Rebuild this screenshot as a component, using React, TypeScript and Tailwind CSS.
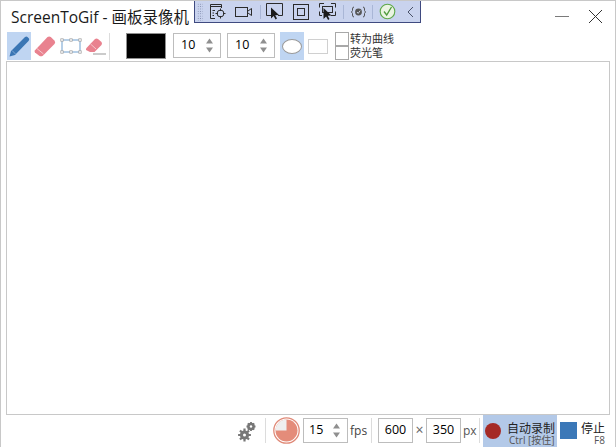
import React from "react";

function Spinner({ value, w = 48, pl = "pl-[7px]" }: { value: string; w?: number; pl?: string }) {
  return (
    <div className={`flex h-[25px] items-center border border-[#bdbdbd] bg-white pr-[6px] ${pl}`} style={{ width: w }}>
      <span className="flex-1 text-[12.5px] leading-none text-black">{value}</span>
      <svg width="9" height="17" viewBox="0 0 9 17">
        <path d="M4.5 1.5 L8 6.5 L1 6.5 Z" fill="#8f8f8f" />
        <path d="M4.5 15.5 L8 10.5 L1 10.5 Z" fill="#8f8f8f" />
      </svg>
    </div>
  );
}

function Pen() {
  return (
    <svg width="24" height="28" viewBox="0 0 24 28">
      <path d="M2.5 24.5 L4 19 L18 5 Q19.5 4 20.5 5 L22 6.5 Q22.7 7.8 21.5 9 L8 23 Z" fill="#3a76b4" />
      <path d="M5 18.5 L8.5 22" stroke="#8fb4da" strokeWidth="0.8" />
    </svg>
  );
}

function Eraser() {
  return (
    <svg width="22" height="24" viewBox="0 0 22 24">
      <path d="M0.8 16.5 L13.5 3 Q15.2 2 16.8 3 L20.6 6.8 Q21.8 8.5 20.5 10 L8.8 21.8 Q7 22.8 5.2 21.8 L1 18.6 Q0.2 17.5 0.8 16.5 Z" fill="#e9828f" />
      <path d="M3 14.6 L9.5 20" stroke="#f6c6cc" strokeWidth="1" />
    </svg>
  );
}

function Select() {
  const pts = [[2, 2], [11, 2], [20, 2], [2, 14], [20, 14], [11, 14]];
  return (
    <svg width="22" height="16" viewBox="0 0 22 16">
      <rect x="2" y="2" width="18" height="12" fill="none" stroke="#6f9fcf" strokeWidth="1" />
      {pts.map(([x, y], i) => (
        <rect key={i} x={x - 1.2} y={y - 1.2} width="2.4" height="2.4" fill="#fff" stroke="#9a9a9a" strokeWidth="0.7" />
      ))}
    </svg>
  );
}

function EraseLine() {
  return (
    <svg width="22" height="20" viewBox="0 0 22 20">
      <path d="M1 12.5 L10 3 Q11.5 2 13 3 L16.5 6 Q17.5 7.5 16.5 9 L9.5 16 L5 16 L1 14 Z" fill="#e9828f" />
      <path d="M5.5 8 L11 13" stroke="#f6c6cc" strokeWidth="1" />
      <path d="M8 18 H21" stroke="#a8a8a8" strokeWidth="1.2" />
    </svg>
  );
}

function VSep({ h = 20, c = "#a9b6d6" }: { h?: number; c?: string }) {
  return <div className="w-px shrink-0" style={{ height: h, backgroundColor: c }} />;
}

function Cursor({ x, y }: { x: number; y: number }) {
  return <path d={`M${x} ${y} L${x} ${y + 11} L${x + 2.6} ${y + 8.6} L${x + 4.6} ${y + 12} L${x + 6} ${y + 11} L${x + 4.2} ${y + 7.8} L${x + 8} ${y + 7.5} Z`} fill="#1b1b1b" />;
}

function FloatBar() {
  const ink = "#2b2b2b";
  return (
    <div className="absolute left-[193px] top-0 flex h-[22px] w-[227px] items-center border border-t-0 border-[#3f4a80] bg-[#c9d3ee]">
      <div className="ml-[2px] h-[18px] w-[6px] bg-[radial-gradient(#7d87a8_0.7px,transparent_0.8px)] bg-[length:2.4px_2.4px]" />
      <svg className="ml-[6px]" width="20" height="17" viewBox="0 0 20 17">
        <path d="M1.5 1.5 H12.5 M1.5 3.5 H12.5 M1.5 1.5 V15.5 H6 M12.5 1.5 V5" stroke={ink} strokeWidth="1" fill="none" />
        <path d="M3.5 7.5 H6 M3.5 10 H5 M3.5 12.5 H5" stroke={ink} strokeWidth="1" />
        <circle cx="11.5" cy="10.5" r="3.4" fill="none" stroke={ink} strokeWidth="1" />
        <path d="M11.5 5.5 V8 M11.5 13 V15.5 M6.5 10.5 H9 M14 10.5 H16.5" stroke={ink} strokeWidth="1" />
      </svg>
      <svg className="ml-[6px]" width="18" height="12" viewBox="0 0 18 12">
        <rect x="0.5" y="1.5" width="12" height="9" fill="none" stroke={ink} />
        <path d="M13 5 L16.5 2.5 V9.5 L13 7" fill="none" stroke={ink} />
      </svg>
      <div className="ml-[7px]"><VSep h={14} /></div>
      <svg className="ml-[5px]" width="18" height="17" viewBox="0 0 18 17">
        <path d="M5 12.5 H0.5 V0.5 H16.5 V12.5 H12" fill="none" stroke={ink} />
        <Cursor x={5} y={4.5} />
      </svg>
      <svg className="ml-[9px]" width="16" height="16" viewBox="0 0 16 16">
        <rect x="0.5" y="0.5" width="15" height="15" fill="none" stroke={ink} />
        <rect x="4.5" y="4.5" width="7" height="7" fill="none" stroke={ink} />
      </svg>
      <svg className="ml-[10px]" width="17" height="17" viewBox="0 0 17 17">
        <path d="M0.5 4.5 V0.5 H5 M12 0.5 H16.5 V4.5 M16.5 8.5 V12.5 H12 M0.5 8.5 V12.5 H3" fill="none" stroke={ink} />
        <rect x="3.5" y="3.5" width="10" height="6" fill="none" stroke={ink} />
        <Cursor x={4.5} y={5} />
      </svg>
      <div className="ml-[7px]"><VSep h={14} /></div>
      <svg className="ml-[7px]" width="15" height="12" viewBox="0 0 15 12">
        <path d="M3 1 Q1.5 1 1.5 3 V4.5 L0.5 6 L1.5 7.5 V9 Q1.5 11 3 11 M12 1 Q13.5 1 13.5 3 V4.5 L14.5 6 L13.5 7.5 V9 Q13.5 11 12 11" fill="none" stroke="#444" strokeWidth="0.9" />
        <circle cx="7.5" cy="6" r="3.4" fill="#555" />
        <path d="M6 6 L7.2 7.4 L9.2 4.6" stroke="#d8def0" strokeWidth="0.9" fill="none" />
      </svg>
      <div className="ml-[6px]"><VSep h={14} /></div>
      <svg className="ml-[6px]" width="17" height="17" viewBox="0 0 17 17">
        <circle cx="8.5" cy="8.5" r="7.3" fill="#eaf4e2" stroke="#5fa84a" strokeWidth="1.1" />
        <path d="M5 8.5 L7.7 12 L12.5 4" stroke="#4f9a3c" strokeWidth="1.3" fill="none" />
      </svg>
      <svg className="ml-[11px]" width="7" height="12" viewBox="0 0 7 12">
        <path d="M6 1 L1 6 L6 11" fill="none" stroke="#4a5268" strokeWidth="1" />
      </svg>
    </div>
  );
}

export default function App() {
  return (
    <div
      className="relative flex h-[447px] w-[616px] flex-col overflow-hidden border-x border-t border-[#c8c8c8] bg-white"
      style={{ fontFamily: '"Open Sans","Noto Sans CJK SC",sans-serif' }}
    >
      <FloatBar />
      {/* title */}
      <div className="flex h-[30px] shrink-0 items-center pl-[10px] pr-[12px]">
        <span className="pt-[3px] text-[15.5px] leading-none text-[#1a1a1a]">ScreenToGif - 画板录像机</span>
        <div className="flex-1" />
        <div className="mr-[19px] h-px w-[14px] bg-[#7a7a7a]" />
        <svg width="15" height="15" viewBox="0 0 15 15">
          <path d="M1 1 L14 14 M14 1 L1 14" stroke="#333" strokeWidth="1" />
        </svg>
      </div>
      {/* toolbar */}
      <div className="flex h-[30px] shrink-0 items-center pl-[6px]">
        <div className="flex h-[28px] w-[24px] items-center justify-center bg-[#bfd5f2]"><Pen /></div>
        <div className="ml-[3px] flex w-[22px] justify-center"><Eraser /></div>
        <div className="ml-[4px] flex w-[22px] justify-center"><Select /></div>
        <div className="ml-[3px] flex w-[22px] justify-center"><EraseLine /></div>
        <div className="ml-[2px]"><VSep h={27} c="#dcdcdc" /></div>
        <div className="ml-[16px] h-[26px] w-[40px] border border-[#8f8f8f] bg-black" />
        <div className="ml-[7px] mb-[1px]"><Spinner value="10" /></div>
        <div className="ml-[6px] mb-[1px]"><Spinner value="10" /></div>
        <div className="ml-[5px] flex h-[28px] w-[24px] items-center justify-center bg-[#bfd5f2]">
          <div className="h-[15px] w-[20px] rounded-[50%] border border-[#9a9a9a] bg-white" />
        </div>
        <div className="ml-[4px] h-[15px] w-[20px] border border-[#d0d0d0] bg-white" />
        <div className="ml-[7px] flex flex-col text-[11px] leading-[14px] text-[#333]">
          <label className="flex items-center"><span className="mr-px h-[14px] w-[14px] border border-[#a8a8a8] bg-white" />转为曲线</label>
          <label className="flex items-center"><span className="mr-px h-[14px] w-[14px] border border-[#a8a8a8] bg-white" />荧光笔</label>
        </div>
      </div>
      {/* canvas */}
      <div className="ml-[5px] mr-[5px] h-[354px] shrink-0 border border-[#c8c8c8] bg-white" />
      {/* status */}
      <div className="flex h-[32px] shrink-0 items-stretch pl-[237px]">
        <svg className="mt-[6px]" width="18" height="21" viewBox="0 0 18 21">
          <g fill="#777">
            <circle cx="6.5" cy="14" r="4.6" />
            <circle cx="13" cy="5.5" r="3.8" />
            <g stroke="#777" strokeWidth="2.2">
              <path d="M6.5 7.6 V20.4 M0.1 14 H12.9 M2 9.5 L11 18.5 M11 9.5 L2 18.5" />
              <path d="M13 1 V10 M8.5 5.5 H17.5 M9.8 2.3 L16.2 8.7 M16.2 2.3 L9.8 8.7" strokeWidth="1.8" />
            </g>
          </g>
          <circle cx="6.5" cy="14" r="1.5" fill="#fff" />
          <circle cx="13" cy="5.5" r="1.2" fill="#fff" />
        </svg>
        <div className="ml-[9px] mt-[3px]"><VSep h={25} c="#dcdcdc" /></div>
        <svg className="ml-[7px] mt-[2px]" width="27" height="27" viewBox="0 0 27 27">
          <circle cx="13.5" cy="13.5" r="12.7" fill="#fff" stroke="#e08a78" strokeWidth="1.3" />
          <circle cx="13.5" cy="13.5" r="11" fill="#e48c7a" />
          <path d="M13.5 13.5 H2.5 A11 11 0 0 1 13.5 2.5 Z" fill="#efefef" />
        </svg>
        <div className="ml-[3px] mt-[3px]"><Spinner value="15" w={45} pl="pl-[5px]" /></div>
        <span className="ml-[2px] mt-[8px] w-[18px] text-[12px] leading-[15px] text-[#444]">fps</span>
        <div className="ml-[3px] mt-[3px]"><VSep h={25} c="#dcdcdc" /></div>
        <div className="ml-[6px] mt-[3px] flex h-[25px] w-[35px] items-center justify-center border border-[#bdbdbd] text-[12.5px] text-black">600</div>
        <span className="mt-[7px] w-[13px] text-center text-[14px] leading-[15px] text-[#666]">×</span>
        <div className="mt-[3px] flex h-[25px] w-[35px] items-center justify-center border border-[#bdbdbd] text-[12.5px] text-black">350</div>
        <span className="ml-[2px] mt-[8px] w-[16px] text-[12px] leading-[15px] text-[#555]">px</span>
        <div className="mt-[3px]"><VSep h={25} c="#dcdcdc" /></div>
        <div className="relative ml-[3px] w-[74px] bg-[#b3c9e8]">
          <div className="absolute left-[2px] top-[8px] h-[16px] w-[16px] rounded-full bg-[#a52a26]" />
          <span className="absolute left-[24px] top-[6px] whitespace-nowrap text-[12px] leading-[16px] text-[#222]">自动录制</span>
          <span className="absolute left-[26px] top-[19px] whitespace-nowrap text-[10px] leading-[12px] text-[#555]">Ctrl [按住]</span>
        </div>
        <div className="relative w-[56px]">
          <div className="absolute left-[3px] top-[7px] h-[17px] w-[17px] bg-[#3b78b8]" />
          <span className="absolute left-[24px] top-[6px] whitespace-nowrap text-[12px] leading-[16px] text-[#222]">停止</span>
          <span className="absolute left-[37px] top-[19px] whitespace-nowrap text-[10px] leading-[12px] text-[#555]">F8</span>
        </div>
      </div>
    </div>
  );
}
